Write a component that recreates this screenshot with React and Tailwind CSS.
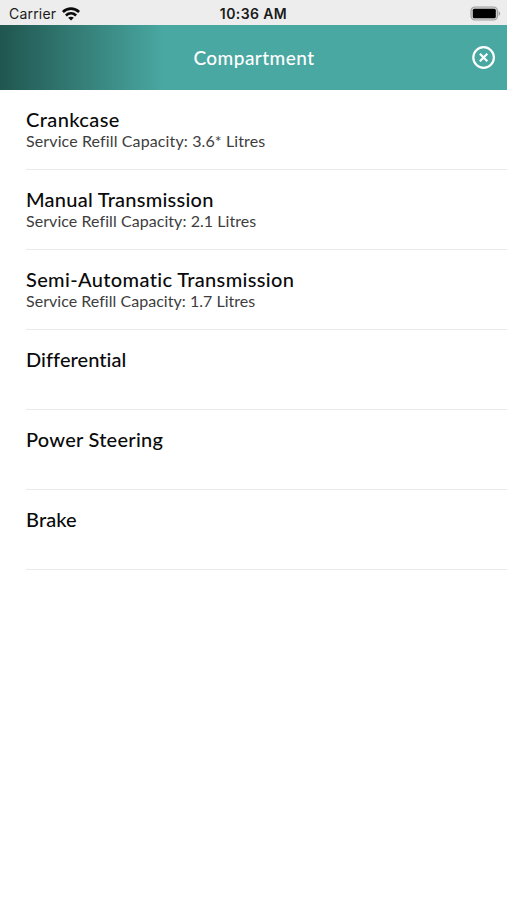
const compartments = [
  { name: 'Crankcase', capacity: '3.6* Litres', nameClass: 'tracking-[0.4px]', capacityClass: 'tracking-[0.12px]' },
  { name: 'Manual Transmission', capacity: '2.1 Litres', nameClass: 'tracking-[0.25px]', capacityClass: 'tracking-[0.06px]' },
  { name: 'Semi-Automatic Transmission', capacity: '1.7 Litres', nameClass: 'tracking-[0.35px]', capacityClass: 'tracking-[0.03px]' },
  { name: 'Differential', nameClass: 'tracking-[0.05px]' },
  { name: 'Power Steering', nameClass: 'tracking-[0.25px]' },
  { name: 'Brake', nameClass: 'tracking-[0.1px]' },
];

function WifiIcon() {
  return (
    <svg width="18" height="14" viewBox="0 0 18 14" fill="none" stroke="#0b0b0b" strokeWidth="2.7">
      <path d="M.9 5C5.6 .6 12.4 .6 17.1 5" />
      <path d="M3.9 8.5c3-2.8 7.2-2.8 10.2 0" />
      <path d="M9 13.6 6.2 10.8c1.5-1.5 4.1-1.5 5.6 0Z" fill="#0b0b0b" stroke="none" />
    </svg>
  );
}

function BatteryIcon() {
  return (
    <svg width="31" height="15" viewBox="0 0 31 15">
      <rect x="1" y="1" width="26.5" height="13" rx="4" fill="#d4d4d4" stroke="#a0a0a0" strokeWidth="1.2" />
      <rect x="2.8" y="2.7" width="23" height="9.6" rx="1.6" fill="#000" />
      <path d="M28.6 5.2c2 .7 2 3.9 0 4.6Z" fill="#a0a0a0" />
    </svg>
  );
}

function CloseIcon() {
  return (
    <svg width="24" height="24" viewBox="0 0 24 24" fill="none" stroke="#fff">
      <circle cx="11.6" cy="11.5" r="10.3" strokeWidth="2.2" />
      <path d="m7.9 7.8 7.4 7.4m0-7.4-7.4 7.4" strokeWidth="2.2" />
    </svg>
  );
}

function StatusBar() {
  return (
    <div className="grid h-[25px] grid-cols-[1fr_auto_1fr] items-center bg-[#ededed] pl-[9px] pr-[6px] pt-[2px] font-['Inter',sans-serif] text-[#1a1a1a]">
      <div className="flex items-center gap-[6px]">
        <span className="text-[14px] leading-none tracking-[0.2px]">Carrier</span>
        <WifiIcon />
      </div>
      <span className="-ml-[3px] text-center text-[14px] font-semibold leading-none tracking-[0.4px]">10:36 AM</span>
      <div className="flex justify-end">
        <BatteryIcon />
      </div>
    </div>
  );
}

function Header() {
  return (
    <header className="grid h-[65px] grid-cols-[1fr_auto_1fr] items-center bg-[#4aa8a2] bg-[linear-gradient(90deg,#20564f_0px,#4aa8a2_165px)] pl-3 pr-[11px]">
      <span />
      <h1 className="pt-[2px] text-[19px] font-medium tracking-[0.45px] text-white">Compartment</h1>
      <button className="justify-self-end" aria-label="Close">
        <CloseIcon />
      </button>
    </header>
  );
}

export default function App() {
  return (
    <div className="min-h-screen bg-white font-['Lato',sans-serif]">
      <StatusBar />
      <Header />
      <ul className="pl-[26px]">
        {compartments.map((item) => (
          <li key={item.name} className="h-20 border-b border-[#e9e9e9] pt-[17px]">
            <h2 className={`text-[20px] font-medium leading-[24px] text-[#0a0a0a] ${item.nameClass}`}>{item.name}</h2>
            {item.capacity && (
              <p className={`text-[16px] leading-[20px] text-[#3d3d3d] ${item.capacityClass}`}>
                Service Refill Capacity: {item.capacity}
              </p>
            )}
          </li>
        ))}
      </ul>
    </div>
  );
}
